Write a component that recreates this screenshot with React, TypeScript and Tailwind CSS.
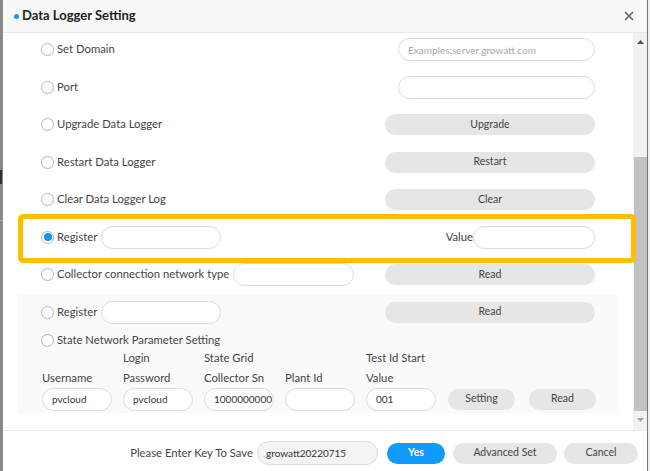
import React from "react";

const Radio = ({ checked = false }: { checked?: boolean }) => (
  <span className="flex h-[13px] w-[13px] shrink-0 items-center justify-center rounded-full border border-[#b4b4b4] bg-white">
    {checked && <span className="h-[8px] w-[8px] rounded-full bg-[#1296f3]" />}
  </span>
);

const Label = ({ text, checked = false }: { text: string; checked?: boolean }) => (
  <div className="flex items-center gap-[3px]">
    <Radio checked={checked} />
    <span className="text-[11.3px] text-[#444] whitespace-nowrap">{text}</span>
  </div>
);

const Field = ({ w, value = "", placeholder = "", cls = "" }: { w: string; value?: string; placeholder?: string; cls?: string }) => (
  <input
    readOnly
    value={value}
    placeholder={placeholder}
    className={`h-[23px] ${w} rounded-full border border-[#dcdcdc] bg-white pl-[9px] text-[10px] text-[#333] outline-none placeholder:text-[#a8a8a8] ${cls}`}
  />
);

const Btn = ({ text, w = "w-[210px]" }: { text: string; w?: string }) => (
  <button className={`h-[21px] ${w} rounded-full bg-[#e6e6e6] text-[10.5px] text-[#444]`}>{text}</button>
);

export default function App() {
  return (
    <div className="flex h-[471px] w-[650px] overflow-hidden bg-white font-['Lato',sans-serif]">
      {/* left page edge */}
      <div className="flex w-[3px] flex-col bg-[#8a8a8a]">
        <div className="h-[170px]" />
        <div className="h-[14px] w-[2px] bg-[#2a2f3a]" />
        <div className="h-[36px]" />
        <div className="h-[1px] bg-[#a9a9a9]" />
      </div>

      {/* dialog */}
      <div className="relative flex w-[644px] flex-col bg-white">
        {/* header */}
        <div className="flex h-[33px] items-center border-b border-[#e9e9e9] bg-[#f8f8f8] pl-[11px] pr-[13px]">
          <span className="h-[5px] w-[5px] rounded-full bg-[#1890ff]" />
          <span className="ml-[3px] text-[13px] font-bold text-[#222]">Data Logger Setting</span>
          <svg className="ml-auto" width="10" height="10" viewBox="0 0 10 10">
            <path d="M1 1L9 9M9 1L1 9" stroke="#555" strokeWidth="1.4" />
          </svg>
        </div>

        {/* body */}
        <div className="flex h-[397px]">
          <div className="flex-1 overflow-hidden">
            <div className="-mt-[2px] flex flex-col">
              <div className="flex h-[37.5px] items-center justify-between px-[38px]">
                <Label text="Set Domain" />
                <Field w="w-[197px]" placeholder="Examples:server.growatt.com" />
              </div>
              <div className="flex h-[37.5px] items-center justify-between px-[38px]">
                <Label text="Port" />
                <Field w="w-[197px]" />
              </div>
              <div className="flex h-[37.5px] items-center justify-between px-[38px]">
                <Label text="Upgrade Data Logger" />
                <Btn text="Upgrade" />
              </div>
              <div className="flex h-[37.5px] items-center justify-between px-[38px]">
                <Label text="Restart Data Logger" />
                <Btn text="Restart" />
              </div>
              <div className="flex h-[37.5px] items-center justify-between px-[38px]">
                <Label text="Clear Data Logger Log" />
                <Btn text="Clear" />
              </div>
              <div className="flex h-[37.5px] items-center justify-between px-[38px]">
                <div className="flex items-center gap-[4px]">
                  <Label text="Register" checked />
                  <Field w="w-[120px]" />
                </div>
                <div className="flex items-center">
                  <span className="text-[11.3px] text-[#444]">Value</span>
                  <Field w="w-[122px]" />
                </div>
              </div>
              <div className="flex h-[37.5px] items-center justify-between px-[38px]">
                <div className="flex items-center gap-[4px]">
                  <Label text="Collector connection network type" />
                  <Field w="w-[121px]" />
                </div>
                <Btn text="Read" />
              </div>

              {/* grey block */}
              <div className="ml-[14px] mr-[16px] flex flex-col bg-[#fafafa] pb-[2px] pl-[24px] pr-[22px]">
                <div className="flex h-[37px] items-center justify-between">
                  <div className="flex items-center gap-[4px]">
                    <Label text="Register" />
                    <Field w="w-[120px]" />
                  </div>
                  <Btn text="Read" />
                </div>
                <div className="flex h-[20px] items-center">
                  <Label text="State Network Parameter Setting" />
                </div>
                <div className="-mt-[3px] flex items-end pl-[1px]">
                  {[
                    ["", "Username", "pvcloud"],
                    ["Login", "Password", "pvcloud"],
                    ["State Grid", "Collector Sn", "1000000000"],
                    ["", "Plant Id", ""],
                    ["Test Id Start", "Value", "001"],
                  ].map(([a, b, v], i) => (
                    <div key={i} className="mr-[11px] flex w-[70px] flex-col">
                      <span className="h-[20px] whitespace-nowrap text-[11.3px] leading-[20px] text-[#444]">{a}</span>
                      <span className="h-[20px] whitespace-nowrap text-[11.3px] leading-[20px] text-[#444]">{b}</span>
                      <Field w="w-[70px]" value={v} cls="pl-[8px]" />
                    </div>
                  ))}
                  <div className="ml-[1px] flex items-center gap-[14px] pb-[1px]">
                    <Btn text="Setting" w="w-[67px]" />
                    <Btn text="Read" w="w-[67px]" />
                  </div>
                </div>
              </div>
            </div>
          </div>

          {/* scrollbar */}
          <div className="flex w-[14px] flex-col items-center bg-[#f1f1f1]">
            <div className="flex h-[17px] items-center justify-center">
              <svg width="7" height="4" viewBox="0 0 7 4">
                <path d="M0 4L3.5 0L7 4Z" fill="#505050" />
              </svg>
            </div>
            <div className="h-[107px]" />
            <div className="h-[254px] w-[13px] bg-[#c1c1c1]" />
            <div className="flex h-[17px] items-center justify-center">
              <svg width="7" height="4" viewBox="0 0 7 4">
                <path d="M0 0L3.5 4L7 0Z" fill="#a3a3a3" />
              </svg>
            </div>
          </div>
        </div>

        {/* footer */}
        <div className="flex h-[41px] items-center justify-end border-t border-[#e9e9e9] pr-[9px] pt-[4px]">
          <span className="text-[11.3px] text-[#444]">Please Enter Key To Save</span>
          <input
            readOnly
            value="growatt20220715"
            className="ml-[4px] h-[24px] w-[121px] rounded-full border border-[#dcdcdc] bg-[#f4f4f4] pl-[8px] text-[10px] text-[#333] outline-none"
          />
          <button className="ml-[9px] h-[21px] w-[58px] rounded-full bg-[#0e9bfa] text-[10.5px] font-bold text-white">Yes</button>
          <button className="ml-[8px] h-[21px] w-[104px] rounded-full bg-[#e6e6e6] text-[10.5px] text-[#444]">Advanced Set</button>
          <button className="ml-[7px] h-[21px] w-[74px] rounded-full bg-[#e6e6e6] text-[10.5px] text-[#444]">Cancel</button>
        </div>

        {/* highlight annotation */}
        <div className="pointer-events-none absolute left-[15px] top-[214px] h-[49px] w-[618px] rounded-[5px] border-[5px] border-[#ffbf00]" />
      </div>

      {/* right page edge */}
      <div className="w-[3px] border-l border-[#777] bg-[#eeeeee]" />
    </div>
  );
}
